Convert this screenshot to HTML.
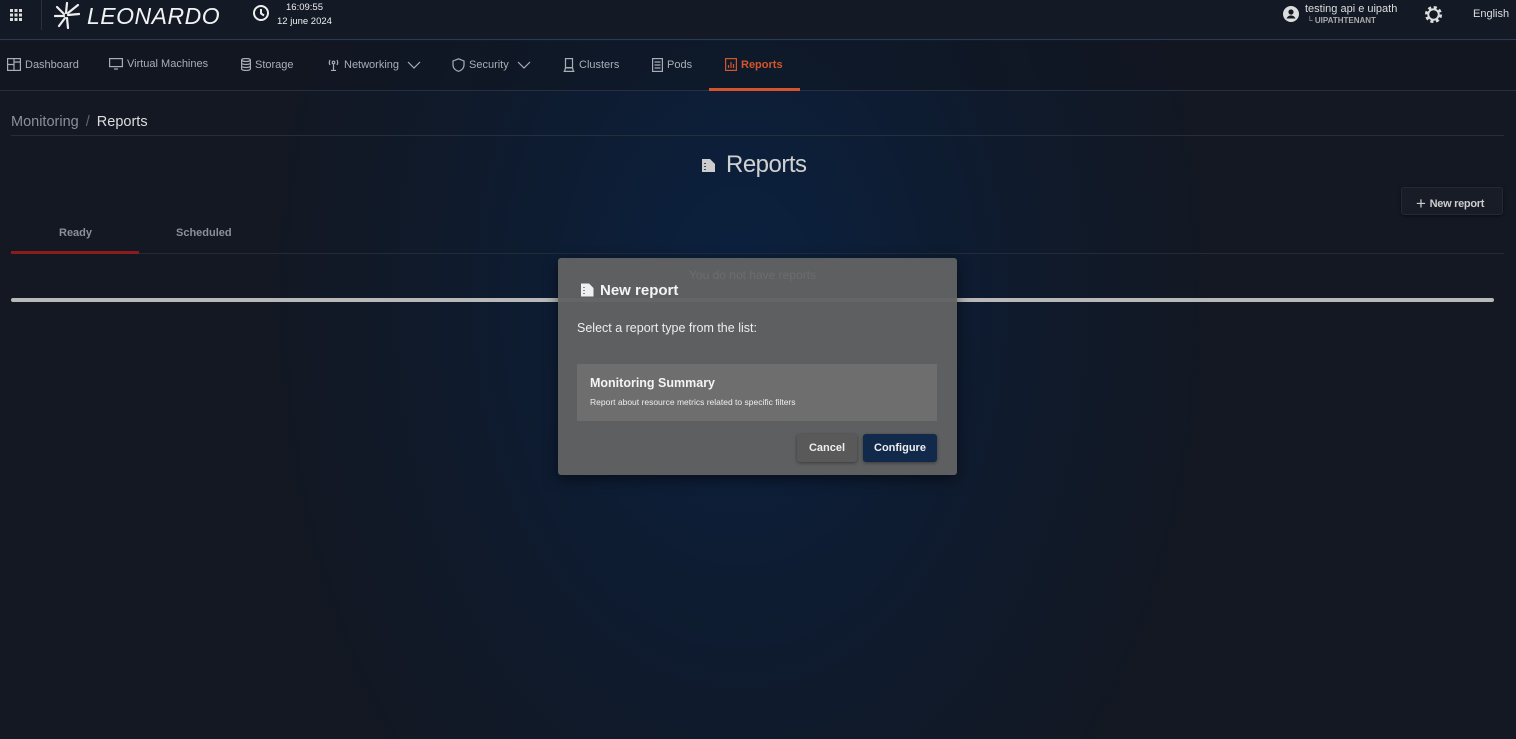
<!DOCTYPE html>
<html><head><meta charset="utf-8"><style>
*{box-sizing:border-box;margin:0;padding:0}
body{width:1516px;height:739px;overflow:hidden;font-family:"Liberation Sans",sans-serif;color:#ccc;
background:radial-gradient(ellipse 480px 700px at 740px 300px,#0b2140 0%,#0f1a2c 60%,#131822 100%);background-color:#131822;position:relative}
.top{position:absolute;left:0;top:0;width:1516px;height:40px;background:#141a25;border-bottom:1px solid #2b3a55}
.nav{position:absolute;left:0;top:41px;width:1516px;height:50px;border-bottom:1px solid #273042;background:rgba(17,22,33,.55)}
.ni{position:absolute;top:17px;font-size:11px;color:#a9aeb6;display:flex;align-items:center;gap:4px}
.ni svg{stroke:#a9aeb6;fill:none;stroke-width:1.2}
.abs{position:absolute}
</style></head><body>
<div class="top">
 <svg class="abs" style="left:9px;top:8px" width="14" height="14" viewBox="0 0 14 14" fill="#ddd"><rect x="1" y="1" width="3" height="3"/><rect x="5.5" y="1" width="3" height="3"/><rect x="10" y="1" width="3" height="3"/><rect x="1" y="5.5" width="3" height="3"/><rect x="5.5" y="5.5" width="3" height="3"/><rect x="10" y="5.5" width="3" height="3"/><rect x="1" y="10" width="3" height="3"/><rect x="5.5" y="10" width="3" height="3"/><rect x="10" y="10" width="3" height="3"/></svg>
 <div class="abs" style="left:41px;top:0;width:1px;height:30px;background:#2a3242"></div>
 <svg class="abs" style="left:54px;top:1px" width="26" height="28" viewBox="0 0 26 28" stroke="#eee" stroke-width="2.2" stroke-linecap="round"><path d="M14 12 L24 4"/><path d="M14 14 L25 13"/><path d="M12 12 L13 2"/><path d="M10 13 L3 6"/><path d="M10 15 L1 15"/><path d="M11 17 L5 25"/><path d="M13 17 L14 27"/></svg>
 <div class="abs" style="left:87px;top:3px;font-size:23px;font-style:italic;color:#f2f2f2;letter-spacing:0.5px">LEONARDO</div>
 <svg class="abs" style="left:252px;top:4px" width="18" height="18" viewBox="0 0 18 18" fill="none" stroke="#eee" stroke-width="2"><circle cx="9" cy="9" r="7"/><path d="M9 5v4.5l3 2"/></svg>
 <div class="abs" style="left:286px;top:2px;font-size:9.5px;color:#eee">16:09:55</div>
 <div class="abs" style="left:277px;top:16px;font-size:9.5px;color:#eee">12 june 2024</div>
 <svg class="abs" style="left:1283px;top:6px" width="16" height="16" viewBox="0 0 16 16"><circle cx="8" cy="8" r="8" fill="#ddd"/><circle cx="8" cy="6" r="2.6" fill="#141a25"/><path d="M3.5 12.5c1-2.2 2.6-3 4.5-3s3.5.8 4.5 3" fill="#141a25"/></svg>
 <div class="abs" style="left:1305px;top:3px;font-size:11px;color:#ddd">testing api e uipath</div>
 <div class="abs" style="left:1307px;top:16px;font-size:8px;color:#aaa;font-weight:bold">└ UIPATHTENANT</div>
 <svg class="abs" style="left:1424px;top:5px" width="19" height="19" viewBox="0 0 20 20"><circle cx="10" cy="10" r="7" fill="none" stroke="#ddd" stroke-width="4" stroke-dasharray="3 2.5"/><circle cx="10" cy="10" r="5.5" fill="none" stroke="#ddd" stroke-width="2"/></svg>
 <div class="abs" style="left:1473px;top:8px;font-size:11px;color:#ddd">English</div>
</div>
<div class="nav">
 <div class="ni" style="left:7px"><svg width="14" height="13" viewBox="0 0 14 13"><rect x=".6" y=".6" width="12.8" height="11.8"/><path d="M7 .6v11.8M.6 6.5h6.4M7 4h6.4"/></svg>Dashboard</div>
 <div class="ni" style="left:109px"><svg width="14" height="12" viewBox="0 0 14 12"><rect x=".6" y=".6" width="12.8" height="8"/><path d="M5 11h4"/></svg>Virtual Machines</div>
 <div class="ni" style="left:241px"><svg width="10" height="13" viewBox="0 0 10 13"><ellipse cx="5" cy="2" rx="4.4" ry="1.5"/><path d="M.6 2v9c0 .8 2 1.5 4.4 1.5s4.4-.7 4.4-1.5V2M.6 5c0 .8 2 1.5 4.4 1.5S9.4 5.8 9.4 5M.6 8c0 .8 2 1.5 4.4 1.5S9.4 8.8 9.4 8"/></svg>Storage</div>
 <div class="ni" style="left:327px"><svg width="13" height="13" viewBox="0 0 13 13"><circle cx="6.5" cy="4.5" r="1.3"/><path d="M6.5 6v6.5M4 12.5h5M3 2a5 5 0 0 0 0 5M10 2a5 5 0 0 1 0 5"/></svg>Networking <svg width="14" height="8" viewBox="0 0 14 8" style="margin-left:4px"><path d="M1 1l6 6 6-6"/></svg></div>
 <div class="ni" style="left:452px"><svg width="13" height="14" viewBox="0 0 13 14"><path d="M6.5 .8L1 3v4c0 3 2.5 5.5 5.5 6.3C9.5 12.5 12 10 12 7V3z"/></svg>Security <svg width="14" height="8" viewBox="0 0 14 8" style="margin-left:4px"><path d="M1 1l6 6 6-6"/></svg></div>
 <div class="ni" style="left:563px"><svg width="12" height="14" viewBox="0 0 12 14"><rect x="2.5" y=".6" width="7" height="9"/><path d="M.6 13.4h10.8M1.5 13.4l1-3.5h7l1 3.5"/></svg>Clusters</div>
 <div class="ni" style="left:652px"><svg width="11" height="14" viewBox="0 0 11 14"><rect x=".6" y=".6" width="9.8" height="12.8"/><path d="M2.5 4h6M2.5 7h6M2.5 10h6"/></svg>Pods</div>
 <div class="ni" style="left:725px;color:#d4552b;font-weight:bold"><svg width="12" height="13" viewBox="0 0 12 13" style="stroke:#d4552b"><rect x=".6" y=".6" width="10.8" height="11.8"/><path d="M3.5 10V7M6 10V4M8.5 10V6"/></svg>Reports</div>
 <div class="abs" style="left:709px;top:47px;width:91px;height:3px;background:#d4552b"></div>
</div>
<div class="abs" style="left:11px;top:114px;font-size:14.5px;color:#8c9099">Monitoring <span style="color:#666;margin:0 3px">/</span> <span style="color:#ddd">Reports</span></div>
<div class="abs" style="left:11px;top:135px;width:1493px;height:1px;background:#262d3b"></div>
<svg class="abs" style="left:701px;top:158px" width="15" height="15" viewBox="0 0 15 15"><path d="M1 1h8l5 5v8H1z" fill="#ccc"/><path d="M4 5v1M4 8v1M4 11v1" stroke="#0c1e38" stroke-width="1.5"/></svg>
<div class="abs" style="left:726px;top:151px;font-size:24px;color:#d0d0d0;letter-spacing:-0.5px">Reports</div>
<div class="abs" style="left:1401px;top:187px;width:102px;height:28px;background:#171c27;border:1px solid #222938;border-radius:3px;box-shadow:0 1px 3px rgba(0,0,0,.5);font-size:11px;color:#ccc;font-weight:bold;padding:4px 0 0 14px;letter-spacing:-0.3px"><span style="font-size:17px;font-weight:normal;position:relative;top:2px;margin-right:4px">+</span>New report</div>
<div class="abs" style="left:59px;top:227px;font-size:11px;font-weight:bold;color:#8b8f97">Ready</div>
<div class="abs" style="left:176px;top:227px;font-size:11px;font-weight:bold;color:#8b8f97">Scheduled</div>
<div class="abs" style="left:11px;top:253px;width:1493px;height:1px;background:#232a38"></div>
<div class="abs" style="left:11px;top:251px;width:128px;height:3px;background:#8c1c1c"></div>
<div class="abs" style="left:11px;top:298px;width:1483px;height:4px;border-radius:2px;background:#b8b8b8"></div>
<div class="abs" style="left:558px;top:258px;width:399px;height:217px;background:rgba(98,98,98,.96);border-radius:3px;box-shadow:0 4px 14px rgba(0,0,0,.5)">
 <div class="abs" style="left:131px;top:10px;font-size:12px;color:#6d6d6d">You do not have reports</div>
 <svg class="abs" style="left:22px;top:25px" width="14" height="14" viewBox="0 0 14 14"><path d="M1 .5h8l4.5 4.5v8.5H1z" fill="#f0f0f0"/><path d="M4 4v1M4 7v1M4 10v1" stroke="#626262" stroke-width="1.4"/></svg>
 <div class="abs" style="left:42px;top:24px;font-size:15px;font-weight:bold;color:#f4f4f4">New report</div>
 <div class="abs" style="left:19px;top:63px;font-size:12.5px;color:#eee">Select a report type from the list:</div>
 <div class="abs" style="left:19px;top:106px;width:360px;height:57px;background:#6e6e6e">
  <div class="abs" style="left:13px;top:12px;font-size:12.5px;font-weight:bold;color:#f4f4f4">Monitoring Summary</div>
  <div class="abs" style="left:13px;top:33px;font-size:8.5px;color:#eee">Report about resource metrics related to specific filters</div>
 </div>
 <div class="abs" style="left:239px;top:176px;width:60px;height:28px;background:#595959;border-radius:3px;box-shadow:0 1px 3px rgba(0,0,0,.4);font-size:11px;font-weight:bold;color:#eee;text-align:center;line-height:28px">Cancel</div>
 <div class="abs" style="left:305px;top:176px;width:74px;height:28px;background:#11294a;border-radius:3px;box-shadow:0 1px 3px rgba(0,0,0,.4);font-size:11px;font-weight:bold;color:#eee;text-align:center;line-height:28px">Configure</div>
</div>
</body></html>
